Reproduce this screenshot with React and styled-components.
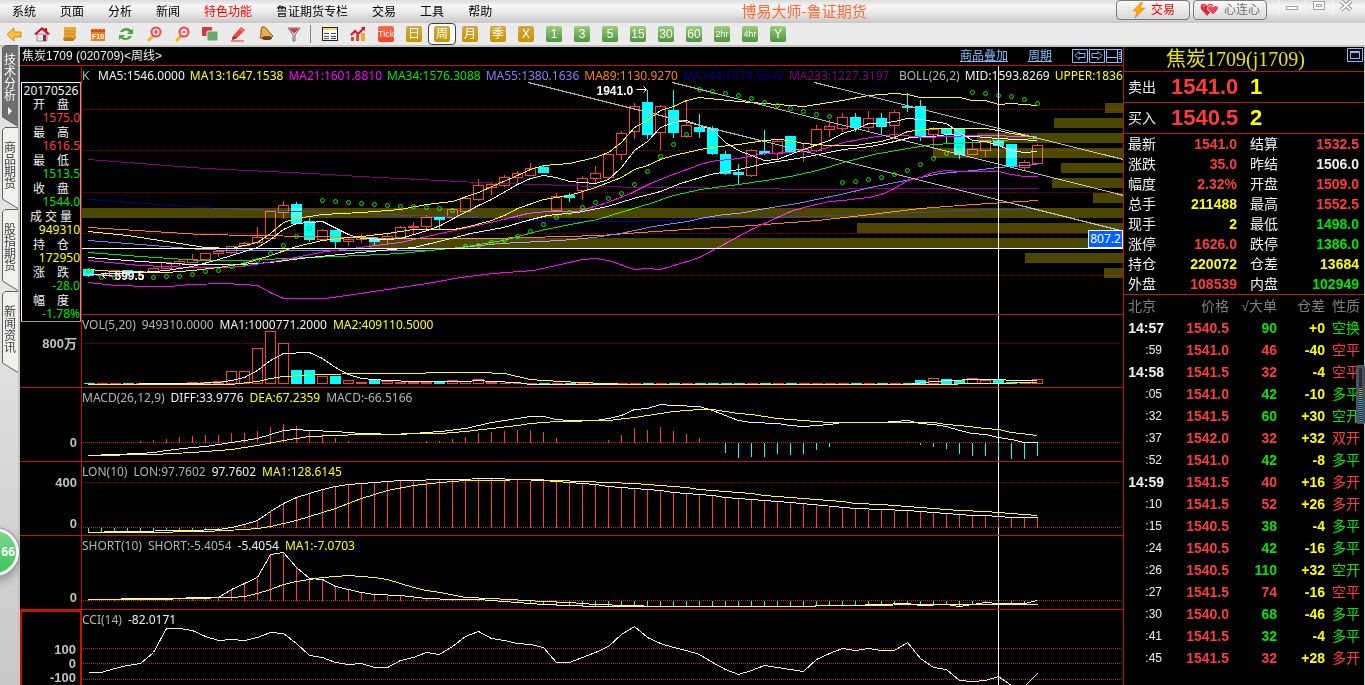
import React from 'react';
import styled, { createGlobalStyle, css } from 'styled-components';

const COLOURS = {
  line: '#c0140a',
  grid: '#8c0000',
  up: '#ff3c3c',
  down: '#00ffff',
  red: '#ff3c3c',
  green: '#00e600',
  yellow: '#ffff00',
  white: '#f0f0f0',
  grey: '#b4b4b4',
  dim: '#808080',
  magenta: '#ff00ff',
  periwinkle: '#8080ff',
  orange: '#ff8000',
  navy: '#000090',
  purple: '#800080',
  link: '#80c0ff',
};

const GlobalStyle = createGlobalStyle`
  * {
    box-sizing: border-box;
  }
  body {
    margin: 0;
    background: #000;
    font-family: 'Noto Sans', 'Noto Sans CJK SC', sans-serif;
    font-size: 12px;
  }
  button {
    font-family: inherit;
    padding: 0;
    border: 0;
    background: none;
  }
  svg {
    display: block;
  }
`;

const SApp = styled.div`
  display: flex;
  flex-direction: column;
  min-height: 100vh;
`;

/* ---------- menu bar ---------- */

const SMenuBar = styled.header`
  display: flex;
  justify-content: space-between;
  height: 23px;
  background: linear-gradient(#dcdcdc, #f6f6f6 25%, #ececec 50%, #c8c8c8);
`;
const SMenu = styled.nav`
  display: flex;
  align-items: center;
  gap: 24px;
  padding-left: 12px;
`;
const SMenuItem = styled.button`
  font-size: 12px;
  line-height: 22px;
  white-space: nowrap;
  color: ${(p) => (p.$hot ? '#ff0000' : '#000')};
`;
const SAppTitle = styled.div`
  font-family: 'Noto Sans CJK SC', sans-serif;
  font-size: 15px;
  line-height: 21px;
  white-space: nowrap;
  color: #ff6a35;
`;
const SWindowTools = styled.div`
  display: flex;
  gap: 3px;
`;
const SPill = styled.button`
  display: flex;
  align-items: center;
  justify-content: center;
  gap: 4px;
  width: 74px;
  height: 20px;
  border: 1px solid #7a7a7a;
  border-radius: 4px;
  background: linear-gradient(#fafafa, #d8d8d8);
  font-size: 12px;
  line-height: 18px;
  color: ${(p) => p.$color};
`;
const SControls = styled.div`
  display: flex;
  padding: 0 6px 0 8px;
`;
const SControl = styled.button`
  display: flex;
  justify-content: center;
  width: 27px;
  height: 15px;
  border-left: 1px solid #f8f8f8;
`;

/* ---------- tool bar ---------- */

const SToolBar = styled.div`
  display: flex;
  align-items: center;
  height: 24px;
  background: #ebebeb;
  border-bottom: 2px solid #c8c4c0;
`;
const SToolButton = styled.button`
  display: flex;
  align-items: center;
  justify-content: center;
  flex: none;
  width: 28px;
  height: 22px;
  ${(p) =>
    p.$active &&
    css`
      background: #fff;
      border: 1px solid #404040;
      border-radius: 4px;
    `}
`;
const SToolDivider = styled.div`
  width: 8px;
  height: 18px;
  border-left: 1px solid #808080;
  margin-left: 2px;
  margin-right: -2px;
`;
const TONES = {
  red: 'linear-gradient(#ff6a4c, #f04020)',
  gold: 'linear-gradient(#d0a84c, #c89600)',
  green: 'linear-gradient(#9ccf7c, #4c9440)',
};
const SChip = styled.span`
  width: 16px;
  height: 16px;
  border-radius: 2px;
  background: ${(p) => TONES[p.$tone]};
  color: #fffff0;
  font-family: 'Liberation Sans', 'Noto Sans CJK SC', sans-serif;
  font-size: ${(p) => (p.$small ? 9 : 12)}px;
  line-height: 16px;
  text-align: center;
`;

/* ---------- side tabs ---------- */

const SBody = styled.div`
  display: flex;
  flex: 1;
  border-right: 1px solid #d0ccc8;
`;
const SSide = styled.aside`
  position: relative;
  z-index: 1;
  display: flex;
  flex-direction: column;
  flex: none;
  width: 20px;
  padding-left: 2px;
  background: linear-gradient(#e0e0e0, #e4e4e4 40%, #c8c8c8);
  border-right: 2px solid #c8c4c0;
`;
const STab = styled.button`
  position: relative;
  display: flex;
  flex-direction: column;
  align-items: center;
  width: 16px;
  height: ${(p) => (p.$active ? 80 : 82)}px;
  padding-top: ${(p) => (p.$active ? 7 : 15)}px;
  color: ${(p) => (p.$active ? '#fff' : '#404040')};
  & > svg {
    position: absolute;
    bottom: 0;
    left: 0;
  }
`;
const STabText = styled.span`
  position: relative;
  width: 12px;
  height: 48px;
  font-size: 12px;
  line-height: 12px;
  word-break: break-all;
`;
const STabArrow = styled.span`
  position: relative;
  margin-top: 5px;
  border: 4px solid transparent;
  border-left-color: #fff;
  border-right: 0;
`;
const STabSpacer = styled.div`
  height: 80px;
`;
const SBadge = styled.div`
  position: absolute;
  top: 481px;
  left: -29px;
  width: 48px;
  height: 48px;
  padding-right: 1px;
  border: 3px solid #f4f4f4;
  border-radius: 50%;
  background: linear-gradient(#7fd890, #3cc458);
  box-shadow: 0 0 0 1px #8c8c8c, 0 4px 8px 2px rgba(0, 0, 0, 0.25);
  color: #fff;
  font-size: 12px;
  font-weight: bold;
  line-height: 42px;
  text-align: right;
`;

/* ---------- charts ---------- */

const SCharts = styled.main`
  position: relative;
  flex: 1;
  min-width: 0;
  background: #000;
`;
const SChartHeader = styled.div`
  display: flex;
  align-items: center;
  height: 19px;
  padding-left: 2px;
  border-bottom: 1px solid ${COLOURS.line};
`;
const SSymbol = styled.div`
  flex: 1;
  font-family: 'Liberation Sans', 'Noto Sans CJK SC', sans-serif;
  font-size: 12px;
  line-height: 18px;
  color: ${COLOURS.white};
`;
const SLink = styled.a`
  margin-right: 20px;
  font-size: 12px;
  line-height: 18px;
  color: ${COLOURS.link};
`;
const SNavIcons = styled.div`
  display: flex;
  gap: 1px;
  padding-right: 1px;
`;
const SPanel = styled.section`
  display: flex;
  height: ${(p) => p.$height}px;
  border-bottom: ${(p) => (p.$last ? 0 : 1)}px solid ${COLOURS.line};
`;
const SAxis = styled.div`
  position: relative;
  flex: none;
  width: 62px;
  border-right: 1px solid ${COLOURS.line};
  ${(p) =>
    p.$active &&
    css`
      border: 2px solid ${COLOURS.line};
      border-bottom: 0;
    `}
`;
const SAxisLabel = styled.div`
  position: absolute;
  right: 4px;
  height: 14px;
  font-family: 'Liberation Sans', 'Noto Sans CJK SC', sans-serif;
  font-size: 13px;
  font-weight: bold;
  line-height: 14px;
  color: #c0c0c0;
`;
const SPlot = styled.div`
  position: relative;
  flex: 1;
  min-width: 0;
  overflow: hidden;
`;
const SSvg = styled.svg`
  width: 100%;
  height: 100%;
  shape-rendering: crispEdges;
  font: bold 12px 'Liberation Sans', sans-serif;
`;
const SLegend = styled.div`
  position: absolute;
  top: 0;
  left: 0;
  display: flex;
  gap: ${(p) => p.$gap}px;
  font-size: 12px;
  line-height: 19px;
  white-space: nowrap;
`;
const SLegendItem = styled.span`
  color: ${(p) => p.$color};
  min-width: ${(p) => p.$min || 0}px;
`;
const SPriceTag = styled.div`
  position: absolute;
  top: 164px;
  right: 0;
  width: 35px;
  height: 18px;
  border: 1px solid #fff;
  background: #0060ff;
  font-size: 12px;
  line-height: 16px;
  text-align: center;
  color: #fff;
`;

const SInfoBox = styled.dl`
  position: absolute;
  top: 35px;
  left: 1px;
  width: 60px;
  margin: 0;
  border: 1px solid #fff;
  border-right-color: #a0a0a0;
  border-bottom-color: #a0a0a0;
  background: #000;
  font-size: 12px;
  line-height: 14px;
  color: ${COLOURS.white};
`;
const SInfoLabel = styled.dt`
  height: 14px;
  line-height: 16px;
  text-align: center;
  white-space: pre;
`;
const SInfoValue = styled.dd`
  height: 14px;
  margin: 0;
  text-align: right;
  color: ${(p) => p.$color};
`;

/* ---------- quote panel ---------- */

const SQuote = styled.aside`
  flex: none;
  width: 241px;
  border-left: 1px solid ${COLOURS.line};
  background: #000;
  color: ${COLOURS.white};
  font-family: 'Liberation Sans', 'Noto Sans CJK SC', sans-serif;
  font-size: 14px;
`;
const SQuoteTitle = styled.div`
  display: flex;
  height: 25px;
  border-bottom: 1px solid ${COLOURS.line};
`;
const SQuoteName = styled.h1`
  flex: 1;
  margin: 0;
  font-family: 'Liberation Serif', 'Noto Sans CJK SC', serif;
  font-size: 20px;
  font-weight: normal;
  line-height: 24px;
  text-align: center;
  color: #e6e600;
`;
const SBook = styled.div`
  display: grid;
  grid-template-columns: 43px 70px 1fr;
  align-items: center;
  height: 31px;
  padding-left: 4px;
  border-bottom: 1px solid ${COLOURS.line};
  line-height: 30px;
`;
const SBookPrice = styled.span`
  font-size: 22px;
  font-weight: bold;
  color: ${COLOURS.red};
`;
const SBookSize = styled.span`
  padding-left: 9px;
  font-size: 22px;
  font-weight: bold;
  color: ${COLOURS.yellow};
`;
const SStats = styled.dl`
  display: grid;
  grid-template-columns: 43px 66px 43px 79px;
  margin: 0;
  padding-left: 4px;
  border-bottom: 1px solid ${COLOURS.line};
  line-height: 20px;
`;
const SStatName = styled.dt`
  height: 20px;
  padding-left: ${(p) => (p.$second ? 13 : 0)}px;
  white-space: nowrap;
`;
const SStatValue = styled.dd`
  height: 20px;
  margin: 0;
  font-weight: bold;
  text-align: right;
  color: ${(p) => p.$color};
`;
const STicks = styled.table`
  width: 100%;
  table-layout: fixed;
  border-collapse: collapse;
  line-height: 22px;
  white-space: nowrap;
`;
const STh = styled.th`
  width: ${(p) => p.$width}px;
  height: 22px;
  padding: 0;
  padding-right: ${(p) => p.$pad || 0}px;
  font-weight: normal;
  text-align: right;
  color: ${COLOURS.dim};
`;
const STd = styled.td`
  height: 22px;
  padding: 0;
  font-weight: bold;
  text-align: right;
  color: ${(p) => p.$color};
`;
const STime = styled(STd)`
  padding-right: 5px;
  ${(p) =>
    p.$minor &&
    css`
      padding-right: 7px;
      font-size: 12px;
      font-weight: normal;
    `}
`;
const SKind = styled(STd)`
  padding-right: 4px;
  font-weight: normal;
`;
const SGauge = styled.div`
  position: absolute;
  top: 365px;
  right: 0;
  width: 9px;
  height: 59px;
  border: 3px solid #4a545c;
  border-radius: 2px;
  background:
    repeating-linear-gradient(transparent 0 1px, #20282e 1px 2px),
    linear-gradient(#38303c 35%, #b0b850 40%, #58a8c8 60%, #2890d0);
`;

/* ---------- icons ---------- */

const ICONS = {
  back: <path d="M1 8.500 8 2v4h7v5H8v4z" fill="#fcc23c" stroke="#d08a10" />,
  home: (
    <>
      <path d="M3 8h10v7H3z" fill="#dfe6ee" stroke="#8896a8" />
      <path d="M8 1 0 8l2 1 6-5 6 5 2-1-3-3V2h-2v1z" fill="#cc1428" />
      <path d="M9 9h3v6H9z" fill="#a02828" />
    </>
  ),
  note: (
    <>
      <path d="M2 1h12v11l-3 3H2z" fill="#e8a838" />
      <path d="M3 5h10M3 8h10M3 11h7" stroke="#c88820" />
      <path d="M1 12h10l3-1-3 4H2z" fill="#b87818" />
    </>
  ),
  f10: (
    <>
      <path d="M1 3h14v12H1z" fill="#f08020" />
      <path d="M1 3h14v3H1z" fill="#e04820" />
      <path d="M4 1v3M8 1v3M12 1v3" stroke="#fcd080" />
      <text x="8" y="13" textAnchor="middle" fill="#fff" fontSize="7" fontWeight="bold" fontFamily="Liberation Sans">F10</text>
    </>
  ),
  refresh: (
    <path
      d="M2 6c2-5 9-5 11-2l2-1v5H9l2-2C9 4 6 4 5 6zM14 10c-2 5-9 5-11 2l-2 2V9h6l-2 2c2 2 5 1 6-1z"
      fill="#48a838"
    />
  ),
  zoomIn: (
    <>
      <path d="M1 14l5-5 2 2-5 5z" fill="#fcb020" />
      <circle cx="10" cy="6" r="4.500" fill="#ffe8e8" stroke="#f04848" strokeWidth="2" />
      <path d="M8 6h4M10 4v4" stroke="#e01818" />
    </>
  ),
  zoomOut: (
    <>
      <path d="M1 14l5-5 2 2-5 5z" fill="#fcb020" />
      <circle cx="10" cy="6" r="4.500" fill="#ffe8e8" stroke="#f04848" strokeWidth="2" />
      <path d="M8 6h4" stroke="#e01818" />
    </>
  ),
  overlay: (
    <>
      <rect x="0" y="1" width="10" height="9" rx="1" fill="#d83838" />
      <rect x="5" y="5" width="11" height="10" rx="1" fill="#68a868" stroke="#e8f0e8" />
    </>
  ),
  pencil: (
    <>
      <path d="M3 10l8-9 4 3-8 8-5 2z" fill="#f04830" />
      <path d="M3 10l4 2-5 2z" fill="#604020" />
      <path d="M9 2l4 3" stroke="#ffb0a0" />
      <path d="M1 15h13" stroke="#e02020" />
    </>
  ),
  bell: (
    <>
      <path d="M4 1c3-1 5 2 7 5l4 4c0 2-9 4-13 2 2-3 0-8 2-11z" fill="#e8b048" stroke="#8a5010" />
      <ellipse cx="9" cy="12" rx="5" ry="2" fill="#70400c" />
    </>
  ),
  filter: (
    <>
      <path d="M2 2h12L9 9v6H7V9z" fill="#d8d8d8" stroke="#707070" />
      <path d="M4 3h8L8 7z" fill="#e83040" stroke="#e83040" />
    </>
  ),
  table: (
    <>
      <rect x="0.500" y="1.500" width="15" height="13" fill="#fff" stroke="#202020" />
      <path d="M1 2h14v2H1z" fill="#f8d860" />
      <path d="M2 7.500h5M2 12.500h5" stroke="#e02020" />
      <path d="M2 10.500h5M9 7.500h5" stroke="#108020" />
      <path d="M9 10.500h5M9 12.500h5" stroke="#2040c0" />
    </>
  ),
  stats: (
    <>
      <path d="M1 11h3v4H1zM6 9h3v6H6z" fill="#e04830" />
      <path d="M11 7h4v8h-4z" fill="#f8a828" />
      <path d="M1 9l4-4 3 3 6-6" fill="none" stroke="#e01020" strokeWidth="2" />
      <path d="M11 1h4v4z" fill="#e01020" />
    </>
  ),
  bolt: <path d="M10 0 2 9h4l-2 7 10-10H9l3-6z" fill="#ffa810" stroke="#e07800" strokeWidth="0.500" />,
  hearts: (
    <>
      <path d="M7 14 1 7C-1 2 5 0 7 4c2-4 8-2 6 3z" fill="#e82838" />
      <path d="M13 13 8 8c-2-4 3-6 5-3 2-3 7-1 5 3z" fill="#f04858" stroke="#fff" />
      <path d="M3 5c0-1 1-2 2-1" stroke="#fff" fill="none" />
    </>
  ),
};

const Icon = ({ name, width = 16 }) => (
  <svg width={width} height="16" viewBox={`0 0 ${width} 16`} aria-hidden="true">
    {ICONS[name]}
  </svg>
);

const NAV_ICONS = [
  { label: '左移', d: 'M3 6.500l4-4v2h6v4H7v2z' },
  { label: '右移', d: 'M13 6.500l-4-4v2H3v4h6v2z' },
  { label: '布局', d: 'M0 8.500h11M11.500 0v13M13 3.500h2M13 5.500h2M13 7.500h2M13 9.500h2' },
];

/* ---------- data ---------- */

const MENU = ['系统', '页面', '分析', '新闻', '特色功能', '鲁证期货专栏', '交易', '工具', '帮助'];
const TOOLS = ['back', 'home', 'note', 'f10', 'refresh', 'zoomIn', 'zoomOut', 'overlay', 'pencil', 'bell', 'filter'];
const CHIPS = [
  ['Tick', 'red'], ['日', 'gold'], ['周', 'gold'], ['月', 'gold'], ['季', 'gold'], ['X', 'gold'],
  ['1', 'green'], ['3', 'green'], ['5', 'green'], ['15', 'green'], ['30', 'green'], ['60', 'green'],
  ['2hr', 'green'], ['4hr', 'green'], ['Y', 'green'],
];
const TABS = ['技术分析', '商品期货', '股指期货', '新闻资讯'];

const INFO = [
  ['开　盘', '1575.0', 'red'],
  ['最　高', '1616.5', 'red'],
  ['最　低', '1513.5', 'green'],
  ['收　盘', '1544.0', 'green'],
  ['成 交 量', '949310', 'yellow'],
  ['持　仓', '172950', 'yellow'],
  ['涨　跌', '-28.0', 'green'],
  ['幅　度', '-1.78%', 'green'],
];

const STATS = [
  ['最新', '1541.0', 'red', '结算', '1532.5', 'red'],
  ['涨跌', '35.0', 'red', '昨结', '1506.0', 'white'],
  ['幅度', '2.32%', 'red', '开盘', '1509.0', 'red'],
  ['总手', '211488', 'yellow', '最高', '1552.5', 'red'],
  ['现手', '2', 'yellow', '最低', '1498.0', 'green'],
  ['涨停', '1626.0', 'red', '跌停', '1386.0', 'green'],
  ['持仓', '220072', 'yellow', '仓差', '13684', 'yellow'],
  ['外盘', '108539', 'red', '内盘', '102949', 'green'],
];

const TICKS = [
  ['14:57', '1540.5', '90', '+0', '空换', 'green'],
  [':59', '1541.0', '46', '-40', '空平', 'red'],
  ['14:58', '1541.5', '32', '-4', '空平', 'red'],
  [':05', '1541.0', '42', '-10', '多平', 'green'],
  [':32', '1541.5', '60', '+30', '空开', 'green'],
  [':37', '1542.0', '32', '+32', '双开', 'red'],
  [':52', '1541.0', '42', '-8', '多平', 'green'],
  ['14:59', '1541.5', '40', '+16', '多开', 'red'],
  [':10', '1541.5', '52', '+26', '多开', 'red'],
  [':15', '1540.5', '38', '-4', '多平', 'green'],
  [':24', '1540.5', '42', '-16', '多平', 'green'],
  [':26', '1540.5', '110', '+32', '空开', 'green'],
  [':27', '1541.5', '74', '-16', '空平', 'red'],
  [':30', '1540.0', '68', '-46', '多平', 'green'],
  [':41', '1541.5', '32', '-4', '多平', 'green'],
  [':45', '1541.5', '32', '+28', '多开', 'red'],
];

// [high, top, bottom, low, rising]
const CANDLES = [
  [269, 269, 275, 276, 0], [274, 274, 275, 275, 1], [270, 270, 276, 276, 1], [269, 270, 273, 274, 0],
  [269, 271, 272, 273, 1], [267, 268, 272, 272, 1], [262, 262, 268, 268, 1], [259, 261, 263, 265, 1],
  [253, 259, 262, 262, 1], [252, 253, 259, 259, 1], [249, 251, 253, 256, 1], [246, 246, 252, 253, 1],
  [241, 243, 245, 246, 1], [226, 237, 242, 243, 1], [209, 211, 238, 238, 1], [200, 205, 212, 218, 1],
  [201, 204, 223, 223, 0], [217, 221, 239, 241, 0], [228, 230, 239, 240, 1], [230, 230, 241, 247, 0],
  [237, 239, 241, 245, 1], [233, 237, 239, 242, 1], [236, 238, 241, 244, 0], [233, 236, 239, 243, 1],
  [225, 227, 237, 237, 1], [221, 226, 227, 234, 1], [214, 217, 226, 229, 1], [215, 216, 219, 228, 0],
  [207, 209, 217, 218, 1], [198, 198, 211, 211, 1], [178, 185, 199, 200, 1], [181, 184, 187, 194, 1],
  [174, 177, 185, 186, 1], [170, 173, 177, 182, 1], [162, 168, 175, 175, 1], [164, 167, 172, 172, 0],
  [192, 196, 210, 210, 1], [192, 195, 197, 201, 0], [175, 178, 190, 199, 1], [165, 173, 178, 183, 1],
  [153, 154, 177, 178, 1], [130, 133, 154, 159, 1], [102, 106, 131, 138, 1], [89, 102, 134, 138, 0],
  [104, 106, 132, 149, 1], [89, 110, 132, 137, 0], [99, 125, 136, 137, 1], [113, 127, 131, 137, 0],
  [125, 128, 153, 154, 0], [150, 154, 173, 174, 0], [163, 172, 174, 183, 0], [148, 150, 175, 176, 1],
  [129, 151, 153, 154, 0], [139, 141, 153, 159, 1], [136, 136, 152, 152, 0], [143, 149, 151, 161, 1],
  [124, 129, 150, 151, 1], [119, 126, 129, 136, 1], [112, 117, 128, 131, 1], [112, 117, 127, 131, 0],
  [110, 118, 127, 131, 1], [112, 118, 126, 133, 0], [109, 112, 125, 138, 1], [92, 106, 107, 111, 0],
  [99, 106, 136, 140, 0], [126, 129, 134, 148, 1], [129, 129, 133, 143, 0], [128, 128, 154, 158, 0],
  [140, 149, 154, 154, 1], [139, 140, 150, 156, 1], [140, 140, 145, 147, 0], [143, 144, 166, 167, 0],
  [159, 162, 167, 169, 1], [143, 145, 163, 163, 1],
];

const SAR = [
  270, 277, 277, 276, 277, 277, 276, 276, 274, 271, 270, 266, 264, 260, 253, 245, 236, 228, 200, 201,
  202, 203, 204, 205, 206, 206, 207, 208, 210, 246, 245, 242, 240, 236, 231, 224, 217, 212, 207, 202,
  198, 193, 184, 171, 156, 144, 134, 89, 91, 93, 95, 98, 102, 105, 108, 111, 114, 116, 182, 181, 179,
  177, 174, 170, 164, 158, 153, 148, 92, 93, 95, 96, 99, 103,
];

// volume at price: [y, left edge]
const PROFILE = [
  [103, 1105], [118, 1054], [133, 977], [148, 933], [163, 1061], [178, 1052],
  [193, 1093], [208, 82], [223, 857], [238, 369], [253, 1025], [268, 1104],
];

const MAIN_LINES = [
  ['purple', '88,159 205,168 310,173 360,176 478,182 595,186 647,187 770,188 790,189 830,189 866,188 1037,188'],
  ['navy', '88,199 200,207 300,211 360,213 490,218 560,221 620,221 700,219 780,217 900,213 960,210 1037,208'],
  ['orange', '88,227 200,234 310,236 400,238 490,238 600,235 640,232 700,228 738,226 817,220 862,215 920,208 973,204 1037,200'],
  ['periwinkle', '88,240 140,244 200,249 230,250 430,250 500,243 560,240 593,237 620,233 653,226 687,221 700,218 723,214 738,213 765,208 797,203 840,194 870,187 890,183 920,177 940,173 973,170 998,167 1037,164'],
  ['green', '88,252 140,256 200,260 240,260 310,257 360,255 400,253 460,247 503,240 540,230 570,224 597,219 623,211 650,203 673,195 700,189 738,184 765,180 790,176 817,170 843,162 873,154 907,148 933,144 973,142 998,140 1037,138'],
  ['white', '88,257 140,261 190,264 240,264 270,262 300,258 360,252 413,247 443,240 470,233 503,227 527,220 547,215 577,212 607,206 633,198 660,191 680,183 700,177 710,174 738,169 765,163 803,157 843,149 870,146 890,142 910,137 933,136 947,134 973,136 998,138 1037,140'],
  ['magenta', '88,260 140,265 190,267 230,267 255,264 290,258 325,251 360,247 400,242 440,233 477,225 503,219 527,213 547,211 577,211 607,202 630,193 650,183 670,175 700,164 710,161 738,158 765,153 790,152 817,150 843,142 870,137 893,134 923,137 973,135 1037,136'],
  ['magenta', '88,282 115,285 150,286 170,286 190,284 225,283 257,285 270,292 283,298 325,298 360,293 427,283 460,277 493,273 533,270 560,264 582,259 595,258 608,260 634,269 647,268 660,269 690,260 699,257 725,243 751,229 777,217 790,211 803,207 829,201 842,200 868,197 881,194 894,188 907,180 920,177 933,172 946,170 959,171 998,171 1011,174 1024,176 1037,176'],
  ['white', '88,274 140,272 166,270 192,266 218,259 244,251 257,247 270,239 283,229 296,223 322,221 348,234 361,238 387,239 400,238 427,230 440,225 453,218 478,205 491,199 517,184 530,178 543,175 556,177 569,181 595,183 608,179 621,167 634,150 647,141 660,127 673,122 686,120 699,125 712,129 725,142 738,150 751,155 764,160 777,159 790,154 803,149 829,140 842,133 855,129 868,123 881,123 894,121 907,118 920,119 946,123 959,132 972,140 985,141 998,145 1011,150 1024,152 1037,151'],
  ['yellow', '88,269 114,271 166,272 192,270 218,267 244,263 270,255 296,246 322,240 348,237 361,236 387,233 413,229 453,229 465,227 491,220 504,215 517,208 543,199 569,195 595,187 621,177 634,169 647,165 660,159 673,155 700,149 712,147 738,144 764,140 777,139 790,140 803,143 829,145 855,145 868,143 881,141 894,137 907,131 933,128 985,128 998,130 1011,133 1024,135 1037,137'],
  ['yellow', '88,231 127,235 153,239 205,247 231,248 257,242 270,233 283,222 296,218 322,214 361,212 400,209 426,204 452,201 478,192 517,175 530,169 543,165 569,163 595,157 608,152 621,142 634,127 647,120 660,110 673,106 686,100 699,97 738,101 764,103 803,106 842,100 868,95 894,93 907,94 920,97 959,97 972,100 985,100 998,104 1011,103 1037,105'],
];

const LON_LINE = '88,532 120,531 190,530 218,529 231,527 244,524 257,520 270,511 283,503 296,497 309,493 322,489 335,486 348,484 374,482 400,480 452,479 491,478 517,479 543,480 569,482 595,484 608,486 660,490 673,492 712,495 725,497 790,502 855,508 907,510 972,515 985,515 1011,517 1037,517';
const SHORT_LINE = '88,599 218,597 231,589 244,583 257,577 270,554 283,552 296,567 309,578 322,579 335,586 348,589 361,592 374,594 400,595 426,598 452,599 478,599 491,600 517,602 543,604 595,606 780,606 850,605 907,603 920,605 946,604 959,606 972,604 985,602 998,603 1024,603 1037,600';

const MACD_BARS = [
  0, 0, 0, -1, -2, -3, -4, -6, -7, -8, -8, -10, -10, -12, -16, -19, -17, -12, -9, -5, -2, 0, 0, 0, 0,
  0, -2, -2, -4, -6, -10, -11, -12, -13, -13, -11, -5, 0, 0, 0, -3, -8, -15, -13, -16, -12, -9, -5, 0,
  10, 15, 14, 14, 11, 12, 11, 7, 4, 0, 0, 0, 0, 0, -1, 2, 4, 6, 11, 13, 13, 13, 16, 16, 13,
];
const VOLUME = [
  0, 0, 0, 0, 0, 0, 0, 0, 1, 1, 2, 12, 12, 35, 52, 40, 13, 13, 7, 7, 3, 1, 3, 2, 1, 1, 1, 1, 3, 2, 4,
  1, 0, 0, 0, 0, 0, 0, 0, 0, 0, 0, 0, 0, 0, 0, 0, 0, 0, 0, 0, 0, 0, 0, 0, 0, 0, 0, 0, 0, 0, 0, 0, 0,
  3, 5, 4, 3, 5, 3, 4, 1, 0, 4,
];

const PANELS = [
  {
    key: 'VOL', top: 315, height: 73, grid: [[343, 1]], axis: [[343, '800万']],
    legend: [['VOL(5,20)', 'grey'], ['949310.0000', 'grey'], ['MA1:1000771.2000', 'white'], ['MA2:409110.5000', 'yellow']],
    lines: [
      ['white', '88,384 190,383 218,382 231,380 244,377 257,370 270,360 283,353 309,352 322,358 335,367 348,374 361,378 387,380 413,381 465,381 478,380 491,381 517,382 530,384 907,384 933,381 972,379 1037,380'],
      ['yellow', '88,384 230,384 257,381 270,378 283,376 322,374 361,373 413,373 439,372 478,372 504,373 517,376 530,379 543,380 580,382 630,384 930,384 985,383 1037,382'],
    ],
  },
  {
    key: 'MACD', top: 388, height: 74, grid: [[442]], axis: [[442, '0']],
    legend: [['MACD(26,12,9)', 'grey'], ['DIFF:33.9776', 'white'], ['DEA:67.2359', 'yellow'], ['MACD:-66.5166', 'grey']],
    lines: [
      ['white', '88,455 114,454 140,453 153,452 166,450 192,447 205,446 231,442 257,438 270,434 283,430 296,429 309,430 335,431 361,433 400,434 426,432 440,431 465,428 491,422 517,418 530,416 543,416 556,419 569,420 595,420 608,418 621,415 634,409 647,408 660,404 673,405 699,406 712,410 738,420 751,422 777,423 790,425 803,426 829,424 842,422 881,422 907,420 920,423 933,424 946,426 959,430 972,433 985,434 998,437 1011,439 1024,442 1037,442'],
      ['yellow', '88,455 153,454 192,452 231,449 257,445 283,440 309,436 335,435 361,434 440,433 465,431 491,428 517,425 530,423 556,421 608,420 634,417 660,413 673,411 699,409 712,409 738,413 751,414 777,418 829,422 933,422 946,424 959,425 985,428 998,429 1011,432 1037,435'],
    ],
  },
  {
    key: 'LON', top: 462, height: 74, grid: [[482, 1], [527]], axis: [[482, '400'], [523, '0']],
    legend: [['LON(10)', 'grey'], ['LON:97.7602', 'grey'], ['97.7602', 'white'], ['MA1:128.6145', 'yellow']],
    lines: [
      ['white', LON_LINE],
      ['yellow', '88,532 140,532 205,531 244,529 257,528 270,526 296,520 335,508 361,498 387,490 413,485 440,482 465,480 491,480 530,479 556,480 608,482 634,483 686,487 699,489 751,493 764,495 842,501 855,503 881,504 959,510 985,511 1037,515'],
    ],
  },
  {
    key: 'SHORT', top: 536, height: 74, grid: [[600]], axis: [[597, '0']],
    legend: [['SHORT(10)', 'grey'], ['SHORT:-5.4054', 'grey'], ['-5.4054', 'white'], ['MA1:-7.0703', 'yellow']],
    lines: [
      ['white', SHORT_LINE],
      ['yellow', '88,599 153,599 192,598 231,597 244,596 257,593 270,589 283,584 296,581 309,579 322,577 348,575 374,577 387,579 400,583 413,587 426,590 440,592 465,597 491,598 543,601 569,602 595,604 660,606 777,606 855,605 933,604 1037,604'],
    ],
  },
  {
    key: 'CCI', top: 610, height: 75, grid: [[648], [663], [679]], axis: [[649, '100'], [663, '0'], [677, '-100']],
    legend: [['CCI(14)', 'grey'], ['-82.0171', 'white']],
    lines: [
      ['white', '88,672 101,672 114,668 127,665 140,663 153,652 166,628 179,628 192,630 205,636 218,640 231,639 244,640 257,637 270,632 283,633 296,643 309,655 322,657 335,662 348,664 361,663 374,667 387,667 400,660 413,657 426,652 439,654 452,646 465,636 478,631 491,638 504,640 517,643 530,644 543,647 556,662 569,662 595,652 608,646 621,634 634,626 647,637 660,643 673,647 686,650 699,654 712,662 725,669 738,674 751,670 764,665 790,669 803,671 816,659 829,653 842,648 855,650 868,648 881,650 894,650 907,642 920,658 933,667 946,669 959,680 972,681 985,680 998,676 1011,685 1024,686 1037,673'],
    ],
  },
];

const MAIN_LEGEND = [
  ['K', 'grey', 11], ['MA5:1546.0000', 'white'], ['MA13:1647.1538', 'yellow'], ['MA21:1601.8810', 'magenta'],
  ['MA34:1576.3088', 'green'], ['MA55:1380.1636', 'periwinkle'], ['MA89:1130.9270', 'orange'],
  ['MA144:1074.9549', 'navy', 101], ['MA233:1227.3197', 'purple', 105], ['BOLL(26,2)', 'grey'],
  ['MID:1593.8269', 'white'], ['UPPER:1836', 'yellow'],
];

const barX = (i) => 88 + 13 * i;

const valueAt = (points, x) => {
  const list = points.split(' ').map((p) => p.split(',').map(Number));
  const next = Math.max(1, list.findIndex((p) => p[0] >= x));
  const [x0, y0] = list[next - 1];
  const [x1, y1] = list[next];
  return Math.round(y0 + ((y1 - y0) * (x - x0)) / (x1 - x0));
};

/* ---------- components ---------- */

const Legend = ({ items, gap }) => (
  <SLegend $gap={gap}>
    {items.map(([text, color, min]) => (
      <SLegendItem key={text} $color={COLOURS[color]} $min={min}>{text}</SLegendItem>
    ))}
  </SLegend>
);

const Lines = ({ lines }) =>
  lines.map(([color, points], i) => (
    <polyline key={i} points={points} fill="none" stroke={COLOURS[color]} />
  ));

const Grid = ({ rows }) =>
  rows.map(([y, dark]) => (
    <line key={y} x1="82" x2="1123" y1={y} y2={y} stroke={dark ? COLOURS.grid : '#c81e14'} strokeDasharray="1 1" />
  ));

const Bars = ({ kind }) =>
  CANDLES.map((candle, i) => {
    const x = barX(i);
    const tone = candle[4] ? COLOURS.up : COLOURS.down;
    if (kind === 'VOL') {
      if (!VOLUME[i]) {
        return <line key={i} x1={x - 5} x2={x + 6} y1="383" y2="383" stroke={tone} />;
      }
      return (
        <rect key={i} x={x - 5} y={383 - VOLUME[i]} width="10" height={VOLUME[i]} stroke={tone} fill={candle[4] ? '#000' : tone} />
      );
    }
    let from = 442;
    let to = 442 + (MACD_BARS[i] || 0);
    if (kind === 'LON') {
      from = 527;
      to = valueAt(LON_LINE, x);
    } else if (kind === 'SHORT') {
      from = 600;
      to = valueAt(SHORT_LINE, x);
    } else if (kind !== 'MACD') {
      return null;
    }
    return <line key={i} x1={x} x2={x} y1={from} y2={to} stroke={to > from ? COLOURS.down : COLOURS.up} />;
  });

const MainChart = () => (
  <SPanel $height={249}>
    <SAxis />
    <SPlot>
      <SSvg viewBox="82 66 1041 248" preserveAspectRatio="none">
        <g transform="translate(0.5 0.5)">
          <Grid rows={[[109, 1], [150, 1], [192, 1], [233, 1], [275, 1]]} />
          {CANDLES.map(([high, top, bottom, low, rising], i) => {
            const tone = rising ? COLOURS.up : COLOURS.down;
            return (
              <g key={i} stroke={tone}>
                <line x1={barX(i)} x2={barX(i)} y1={high} y2={low} />
                <rect x={barX(i) - 5} y={top} width="10" height={bottom - top} fill={rising ? '#000' : tone} />
              </g>
            );
          })}
          <Lines lines={MAIN_LINES} />
          <g stroke="#b8b8b8">
            <line x1="528" y1="82" x2="1120" y2="230" />
            <line x1="672" y1="82" x2="1123" y2="195" />
            <line x1="814" y1="82" x2="1123" y2="159" />
          </g>
          <g fill="none" stroke={COLOURS.green} shapeRendering="auto">
            {SAR.map((y, i) => (
              <circle key={i} cx={barX(i)} cy={y} r="2" />
            ))}
          </g>
          <g fill="#fff" shapeRendering="auto">
            <text x="596" y="94">1941.0</text>
            <path d="M636 89h10M643 86l3 3-3 3" fill="none" stroke="#fff" />
            <text x="114" y="279">599.5</text>
            <path d="M112 275h-10M105 272l-3 3 3 3" fill="none" stroke="#fff" />
          </g>
        </g>
        <g fill="#4b4600" style={{ mixBlendMode: 'screen' }}>
          {PROFILE.map(([y, x]) => (
            <rect key={y} x={x} y={y} width={1123 - x} height="10" />
          ))}
        </g>
        <path d="M998.500 66v248M82 248.500h1041" stroke="#fff" />
      </SSvg>
      <Legend items={MAIN_LEGEND} gap={5} />
      <SPriceTag>807.2</SPriceTag>
    </SPlot>
  </SPanel>
);

const IndicatorPanel = ({ panel, last }) => {
  const plotHeight = last ? panel.height : panel.height - 1;
  return (
    <SPanel $height={panel.height} $last={last}>
      <SAxis $active={last}>
        {panel.axis.map(([y, text]) => (
          <SAxisLabel key={text} style={{ top: y - panel.top - (last ? 8 : 6) }}>{text}</SAxisLabel>
        ))}
      </SAxis>
      <SPlot>
        <SSvg viewBox={`82 ${panel.top} 1041 ${plotHeight}`} preserveAspectRatio="none">
          <g transform="translate(0.5 0.5)">
            <Grid rows={panel.grid} />
            <line x1="998" x2="998" y1={panel.top - 1} y2={panel.top + 75} stroke="#fff" />
            <Bars kind={panel.key} />
            <Lines lines={panel.lines} />
          </g>
        </SSvg>
        <Legend items={panel.legend} gap={6} />
      </SPlot>
    </SPanel>
  );
};

const Header = () => (
  <SMenuBar>
    <SMenu>
      {MENU.map((item) => (
        <SMenuItem key={item} $hot={item === '特色功能'}>{item}</SMenuItem>
      ))}
    </SMenu>
    <SAppTitle>博易大师-鲁证期货</SAppTitle>
    <SWindowTools>
      <SPill $color="#ff0000"><Icon name="bolt" />交易</SPill>
      <SPill $color="#707070"><Icon name="hearts" width={20} />心连心</SPill>
      <SControls>
        <SControl aria-label="最小化">
          <svg width="12" height="14"><rect x="0.500" y="6.500" width="11" height="3" fill="#fff" stroke="#a0a0a0" /></svg>
        </SControl>
        <SControl aria-label="最大化">
          <svg width="12" height="14">
            <rect x="0.500" y="1.500" width="11" height="8" fill="#fff" stroke="#a0a0a0" />
            <rect x="3.500" y="4.500" width="5" height="2" fill="#fff" stroke="#a0a0a0" />
          </svg>
        </SControl>
        <SControl aria-label="关闭">
          <svg width="12" height="14">
            <path d="M1 1l10 9M11 1L1 10" stroke="#909090" strokeWidth="4" />
            <path d="M1 1l10 9M11 1L1 10" stroke="#fff" strokeWidth="2" />
          </svg>
        </SControl>
      </SControls>
    </SWindowTools>
  </SMenuBar>
);

const ToolBar = () => (
  <SToolBar>
    {TOOLS.map((name) => (
      <SToolButton key={name} aria-label={name}><Icon name={name} /></SToolButton>
    ))}
    <SToolDivider />
    <SToolButton aria-label="table"><Icon name="table" /></SToolButton>
    <SToolButton aria-label="stats"><Icon name="stats" /></SToolButton>
    {CHIPS.map(([text, tone]) => (
      <SToolButton key={text} $active={text === '周'}>
        <SChip $tone={tone} $small={text.length > 2}>{text}</SChip>
      </SToolButton>
    ))}
  </SToolBar>
);

const SideTabs = () => (
  <SSide>
    {TABS.map((tab, i) => (
      <STab key={tab} $active={i === 0}>
        <svg width="16" height="82" aria-hidden="true">
          <path
            d="M16 0.500H3L0.500 3v69L16 81.500"
            fill={i === 0 ? '#6e6e6e' : '#f0f0ec'}
            stroke="#606060"
          />
        </svg>
        <STabText>{tab}</STabText>
        {i === 0 && <STabArrow />}
      </STab>
    ))}
    <STabSpacer />
    <SBadge>66</SBadge>
  </SSide>
);

const InfoBox = () => (
  <SInfoBox>
    <SInfoLabel>20170526</SInfoLabel>
    {INFO.map(([label, value, color]) => (
      <React.Fragment key={label}>
        <SInfoLabel>{label}</SInfoLabel>
        <SInfoValue $color={COLOURS[color]}>{value}</SInfoValue>
      </React.Fragment>
    ))}
  </SInfoBox>
);

const QuotePanel = () => (
  <SQuote>
    <SQuoteTitle>
      <SQuoteName>焦炭1709(j1709)</SQuoteName>
      <svg width="17" height="16" aria-hidden="true">
        <path d="M0.500 1.500h15v13h-15zM3.500 4.500h9v7h-9zM3 5.500h10" fill="none" stroke={COLOURS.link} />
      </svg>
    </SQuoteTitle>
    <SBook>
      <span>卖出</span>
      <SBookPrice>1541.0</SBookPrice>
      <SBookSize>1</SBookSize>
    </SBook>
    <SBook>
      <span>买入</span>
      <SBookPrice>1540.5</SBookPrice>
      <SBookSize>2</SBookSize>
    </SBook>
    <SStats>
      {STATS.map(([name, value, color, name2, value2, color2]) => (
        <React.Fragment key={name}>
          <SStatName>{name}</SStatName>
          <SStatValue $color={COLOURS[color]}>{value}</SStatValue>
          <SStatName $second>{name2}</SStatName>
          <SStatValue $color={COLOURS[color2]}>{value2}</SStatValue>
        </React.Fragment>
      ))}
    </SStats>
    <STicks>
      <thead>
        <tr>
          <STh $width={45} $pad={13}>北京</STh>
          <STh $width={60}>价格</STh>
          <STh $width={48}>√大单</STh>
          <STh $width={48}>仓差</STh>
          <STh $width={39} $pad={4}>性质</STh>
        </tr>
      </thead>
      <tbody>
        {TICKS.map(([time, price, size, delta, kind, color]) => (
          <tr key={time}>
            <STime $color={COLOURS.white} $minor={time[0] === ':'}>{time}</STime>
            <STd $color={COLOURS.red}>{price}</STd>
            <STd $color={COLOURS[color]}>{size}</STd>
            <STd $color={COLOURS.yellow}>{delta}</STd>
            <SKind $color={COLOURS[color]}>{kind}</SKind>
          </tr>
        ))}
      </tbody>
    </STicks>
  </SQuote>
);

const App = () => (
  <SApp>
    <GlobalStyle />
    <Header />
    <ToolBar />
    <SBody>
      <SideTabs />
      <SCharts>
        <SChartHeader>
          <SSymbol>焦炭1709 (020709)&lt;周线&gt;</SSymbol>
          <SLink href="#overlay">商品叠加</SLink>
          <SLink href="#period">周期</SLink>
          <SNavIcons>
            {NAV_ICONS.map(({ label, d }) => (
              <svg key={label} width="16" height="14" role="img" aria-label={label}>
                <path d={`M0.500 0.500h15v13h-15z${d}`} fill="none" stroke={COLOURS.link} />
              </svg>
            ))}
          </SNavIcons>
        </SChartHeader>
        <MainChart />
        {PANELS.map((panel, i) => (
          <IndicatorPanel key={panel.key} panel={panel} last={i === PANELS.length - 1} />
        ))}
        <InfoBox />
      </SCharts>
      <QuotePanel />
    </SBody>
    <SGauge />
  </SApp>
);

export default App;
